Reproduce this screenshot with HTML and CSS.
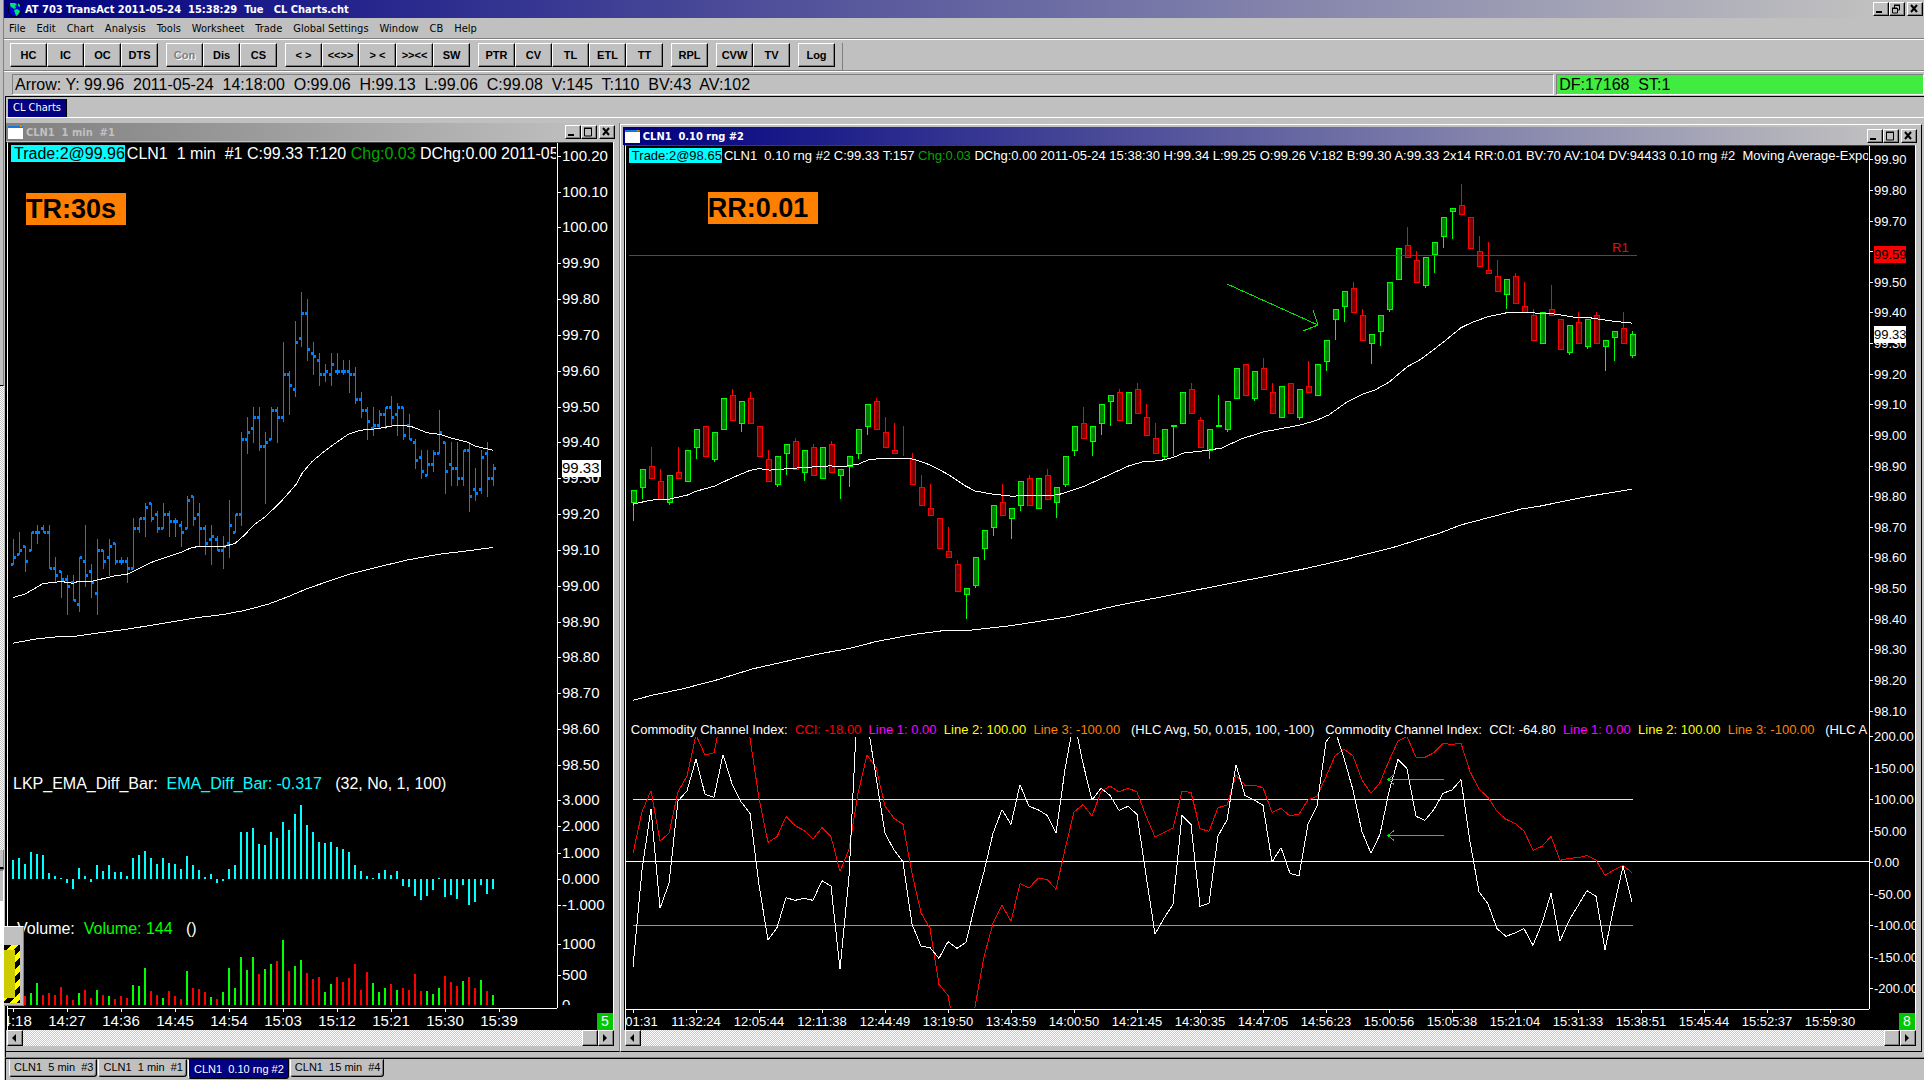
FILE: index.html
```html
<!DOCTYPE html>
<html lang="en">
<head>
    <meta charset="UTF-8">
    <meta name="viewport" content="width=device-width, initial-scale=1.0">
    <title>AT 703 TransAct</title>
    <link rel="stylesheet" href="styles.css">
</head>
<body>

<div class="behind">
    <div class="behind-top"></div>
    <div class="behind-track"></div>
    <div class="behind-button"></div>
    <div class="behind-box"></div>
    <div class="behind-page"></div>
</div>

<main class="app">
    <header class="title-bar app-title">
        <svg class="globe" viewBox="0 0 14 16">
            <ellipse cx="7" cy="8" rx="6.5" ry="7.5" fill="#0000d8" stroke="#000"/>
            <path d="M2 2h5l2 2-2 1 1 2-2 1-1-1-2-1-1-2zM6 9l3-1 3 2-2 4-2 1-1-3zM10 2l2 2v2l-2-1z" fill="#00e070"/>
        </svg>
        <h1>AT 703 TransAct 2011-05-24&nbsp; 15:38:29&nbsp; Tue&nbsp;&nbsp; CL Charts.cht</h1>
        <div class="window-buttons">
            <button aria-label="Minimize"><svg viewBox="0 0 12 10"><path d="M2 8h6" stroke-width="2"/></svg></button>
            <button aria-label="Restore"><svg viewBox="0 0 12 10"><path d="M4 1h6M4 1.5h6M9.500 1v5H8M4.500 1v3M2 4h5M2 4.500h5M2.500 4v5h5v-5"/></svg></button>
            <button aria-label="Close"><svg viewBox="0 0 12 10"><path d="M3 1l6 7M9 1l-6 7" stroke-width="2"/></svg></button>
        </div>
    </header>

    <nav class="menu">
        <button>File</button>
        <button>Edit</button>
        <button>Chart</button>
        <button>Analysis</button>
        <button>Tools</button>
        <button>Worksheet</button>
        <button>Trade</button>
        <button>Global Settings</button>
        <button>Window</button>
        <button>CB</button>
        <button>Help</button>
    </nav>

    <div class="toolbar">
        <div class="tool-group">
            <button>HC</button><button>IC</button><button>OC</button><button>DTS</button>
        </div>
        <div class="tool-group">
            <button disabled>Con</button><button>Dis</button><button>CS</button>
        </div>
        <div class="tool-group">
            <button>&lt; &gt;</button><button>&lt;&lt;&gt;&gt;</button><button>&gt; &lt;</button><button>&gt;&gt;&lt;&lt;</button><button>SW</button>
        </div>
        <div class="tool-group">
            <button>PTR</button><button>CV</button><button>TL</button><button>ETL</button><button>TT</button>
        </div>
        <div class="tool-group">
            <button>RPL</button>
        </div>
        <div class="tool-group">
            <button>CVW</button><button>TV</button>
        </div>
        <div class="tool-group">
            <button>Log</button>
        </div>
    </div>

    <div class="status">
        <div class="status-main">Arrow: Y: 99.96  2011-05-24  14:18:00  O:99.06  H:99.13  L:99.06  C:99.08  V:145  T:110  BV:43  AV:102</div>
        <div class="status-feed">DF:17168  ST:1</div>
    </div>

    <div class="workbook">
        <div class="workbook-tabs"><button>CL Charts</button></div>

        <div class="workspace">
            <section class="window window-min">
                <div class="title-bar inactive">
                    <svg class="doc-icon" viewBox="0 0 15 13"><path d="M0 0h15v13H0z" fill="#fff"/><path d="M0 0h15v2H0z" fill="#1878d8"/><path d="M12 0h2v1h-2z" fill="#f80"/></svg>
                    <h2>CLN1&nbsp; 1 min&nbsp; #1</h2>
                    <div class="window-buttons">
                        <button aria-label="Minimize"><svg viewBox="0 0 12 10"><path d="M2 8h6" stroke-width="2"/></svg></button>
                        <button aria-label="Maximize"><svg viewBox="0 0 12 10"><path d="M2 1h8M2 1.500h8M2.500 1v8h7v-8"/></svg></button>
                        <button aria-label="Close"><svg viewBox="0 0 12 10"><path d="M3 1l6 7M9 1l-6 7" stroke-width="2"/></svg></button>
                    </div>
                </div>
                <div class="chart">
                    <svg id="minChart" class="plot"></svg>
                    <p class="info info-head"><mark>Trade:2@99.96</mark>CLN1  1 min  #1 C:99.33 T:120 <span class="up">Chg:0.03</span> DChg:0.00 2011-05-</p>
                    <p class="info info-diff">LKP_EMA_Diff_Bar:  <span class="cyan">EMA_Diff_Bar: -0.317</span>   (32, No, 1, 100)</p>
                    <p class="info info-volume">Volume:  <span class="green">Volume: 144</span>   ()</p>
                    <div class="badge badge-tr">TR:30s</div>
                    <div class="link-number">5</div>
                </div>
                <div class="scrollbar">
                    <button aria-label="Scroll left"><svg viewBox="0 0 12 12"><path d="M8 2v8L4 6z"/></svg></button>
                    <span class="thumb"></span>
                    <button aria-label="Scroll right"><svg viewBox="0 0 12 12"><path d="M4 2v8l4-4z"/></svg></button>
                </div>
            </section>

            <section class="window window-range">
                <div class="title-bar">
                    <svg class="doc-icon" viewBox="0 0 15 13"><path d="M0 0h15v13H0z" fill="#fff"/><path d="M0 0h15v2H0z" fill="#1878d8"/><path d="M12 0h2v1h-2z" fill="#f80"/></svg>
                    <h2>CLN1&nbsp; 0.10 rng #2</h2>
                    <div class="window-buttons">
                        <button aria-label="Minimize"><svg viewBox="0 0 12 10"><path d="M2 8h6" stroke-width="2"/></svg></button>
                        <button aria-label="Maximize"><svg viewBox="0 0 12 10"><path d="M2 1h8M2 1.500h8M2.500 1v8h7v-8"/></svg></button>
                        <button aria-label="Close"><svg viewBox="0 0 12 10"><path d="M3 1l6 7M9 1l-6 7" stroke-width="2"/></svg></button>
                    </div>
                </div>
                <div class="chart">
                    <svg id="rangeChart" class="plot"></svg>
                    <p class="info info-head"><mark>Trade:2@98.65</mark>CLN1  0.10 rng #2 C:99.33 T:157 <span class="up">Chg:0.03</span> DChg:0.00 2011-05-24 15:38:30 H:99.34 L:99.25 O:99.26 V:182 B:99.30 A:99.33 2x14 RR:0.01 BV:70 AV:104 DV:94433 0.10 rng #2  Moving Average-Expo</p>
                    <p class="info info-cci">Commodity Channel Index:  <span class="red">CCI: -18.00</span>  <span class="magenta">Line 1: 0.00</span>  <span class="yellow">Line 2: 100.00</span>  <span class="orange">Line 3: -100.00</span>   (HLC Avg, 50, 0.015, 100, -100)   Commodity Channel Index:  CCI: -64.80  <span class="magenta">Line 1: 0.00</span>  <span class="yellow">Line 2: 100.00</span>  <span class="orange">Line 3: -100.00</span>   (HLC A</p>
                    <div class="badge badge-rr">RR:0.01</div>
                    <div class="link-number">8</div>
                </div>
                <div class="scrollbar">
                    <button aria-label="Scroll left"><svg viewBox="0 0 12 12"><path d="M8 2v8L4 6z"/></svg></button>
                    <span class="thumb"></span>
                    <button aria-label="Scroll right"><svg viewBox="0 0 12 12"><path d="M4 2v8l4-4z"/></svg></button>
                </div>
            </section>
        </div>
    </div>

    <div class="sheet-tabs">
        <button>CLN1&nbsp; 5 min&nbsp; #3</button>
        <button>CLN1&nbsp; 1 min&nbsp; #1</button>
        <button class="current">CLN1&nbsp; 0.10 rng #2</button>
        <button>CLN1&nbsp; 15 min&nbsp; #4</button>
    </div>

    <div class="floater"><div class="hazard"></div></div>
</main>

<script src="script.js"></script>
</body>
</html>
```

FILE: styles.css
```css
* {
    box-sizing: border-box;
}
body {
    margin: 0;
    height: 100vh;
    display: flex;
    overflow: hidden;
    background: #c0c0c0;
    font-family: "Liberation Sans", Arial, sans-serif;
    font-size: 11px;
    color: #000;
}
h1, h2, p {
    margin: 0;
    font-size: 12px;
}
button {
    margin: 0;
    padding: 0;
    border: none;
    background: #c0c0c0;
    color: #000;
    font-family: inherit;
    font-size: 11px;
}

/* strip of the window behind */
.behind {
    flex: 0 0 4px;
    display: flex;
    flex-direction: column;
}
.behind-top {
    flex: 387;
    border-bottom: 1px solid #000;
    border-right: 1px solid #808080;
}
.behind-track {
    flex: 466;
    background: repeating-conic-gradient(#fff 0 25%, #c0c0c0 0 50%) 0 0 / 2px 2px;
}
.behind-button {
    flex: 17;
    border-bottom: 2px solid #000;
    border-right: 1px solid #808080;
}
.behind-box {
    flex: 30;
    border-top: 2px solid #808080;
    border-right: 1px solid #fff;
}
.behind-page {
    flex: 180;
    background: #fff;
}

.app {
    flex: 1;
    min-width: 0;
    display: flex;
    flex-direction: column;
    position: relative;
}

/* title bars */
.title-bar {
    display: flex;
    align-items: center;
    height: 18px;
    gap: 3px;
    padding: 0 0 0 2px;
    background: linear-gradient(to right, #000080, #c0c0c0 97%);
    color: #fff;
}
.title-bar h1,
.title-bar h2 {
    flex: 1;
    font-family: "DejaVu Sans Condensed", Roboto, sans-serif;
    font-size: 11px;
    white-space: nowrap;
}
.app-title {
    flex: none;
    padding: 0 1px 0 4px;
}
.title-bar.inactive {
    background: linear-gradient(to right, #808080, #c0c0c0 97%);
    color: #c0c0c0;
}
.globe {
    width: 14px;
    height: 16px;
}
.doc-icon {
    width: 15px;
    height: 13px;
}
.window-buttons {
    display: flex;
}
.window-buttons button {
    width: 16px;
    height: 14px;
    border: 1px solid;
    border-color: #fff #000 #000 #fff;
    box-shadow: inset -1px -1px #808080;
}
.window-buttons button:last-child {
    margin-left: 2px;
}
.window-buttons svg {
    display: block;
    width: 12px;
    height: 10px;
    fill: none;
    stroke: #000;
}

.menu {
    flex: none;
    display: flex;
    gap: 11px;
    height: 22px;
    padding: 0 5px 1px;
    border-bottom: 1px solid #fff;
    box-shadow: inset 0 -1px #808080;
}
.menu button {
    background: none;
    font-family: "DejaVu Sans Condensed", Roboto, sans-serif;
}

.toolbar {
    flex: none;
    display: flex;
    gap: 8px;
    height: 32px;
    padding: 3px 6px 0;
    border-bottom: 1px solid #fff;
    box-shadow: inset 0 -1px #808080;
}
.tool-group {
    display: flex;
}
.tool-group:last-child {
    padding-right: 7px;
    border-right: 1px solid #808080;
}
.toolbar button {
    width: 37px;
    height: 24px;
    border: 1px solid;
    border-color: #fff #000 #000 #fff;
    box-shadow: inset -1px -1px #808080;
    font-weight: bold;
}
.toolbar button:disabled {
    color: #808080;
    text-shadow: 1px 1px #fff;
}

.status {
    flex: none;
    display: flex;
    gap: 2px;
    height: 24px;
    padding: 2px 0 1px 4px;
    border-left: 4px solid #c0c0c0;
    font-size: 16px;
    line-height: 19px;
    white-space: pre;
}
.status-main,
.status-feed {
    padding: 0 2px;
    border: 1px solid;
    border-color: #808080 #fff #fff #808080;
    overflow: hidden;
}
.status-main {
    flex: 1537;
}
.status-feed {
    flex: 362;
    background: #40ec40;
}

/* MDI area */
.workbook {
    flex: 1;
    min-height: 0;
    display: flex;
    flex-direction: column;
    margin-left: 1px;
    border-top: 1px solid #000;
    border-left: 1px solid #000;
    border-bottom: 1px solid #808080;
}
.workbook-tabs {
    flex: none;
    display: flex;
    height: 21px;
    padding: 2px 2px 0;
    border-bottom: 1px solid #fff;
}
.workbook-tabs button {
    padding: 0 5px 2px;
    border-right: 1px solid #000;
    background: #000080;
    color: #fff;
    font-family: "DejaVu Sans Condensed", Roboto, sans-serif;
}
.workspace {
    flex: 1;
    min-height: 0;
    display: flex;
    padding: 5px 2px 5px 0;
}
.window {
    min-width: 0;
    display: flex;
    flex-direction: column;
    border-bottom: 1px solid #000;
}
.window .title-bar {
    flex: none;
}
.window-min {
    flex: 613;
    padding: 0 4px 5px 0;
    border-right: 1px solid #808080;
}
.window-range {
    flex: 1303;
    margin-top: 1px;
    padding: 2px 4px 5px 2px;
    border-top: 1px solid #fff;
    border-left: 1px solid #fff;
    border-right: 1px solid #000;
}
.chart {
    flex: 1;
    min-height: 0;
    position: relative;
    margin: 0 2px 0 1px;
    border-left: 1px solid #fff;
    border-top: 1px solid #404040;
    background: #000;
    box-shadow: 1px 0 #fff, -1px 0 #000;
    color: #fff;
    overflow: hidden;
}
.window-min .chart {
    margin-top: 1px;
}
.window-range .chart,
.window-range .scrollbar {
    margin-left: 2px;
}
.plot {
    display: block;
    width: 100%;
    height: 100%;
    shape-rendering: crispEdges;
}

/* captions and badges lying over the plot */
.info {
    position: absolute;
    left: 3px;
    white-space: pre;
    overflow: hidden;
}
.info-head {
    top: 2px;
}
.info mark {
    margin-right: 2px;
    padding-left: 3px;
    background: #00ffff;
    color: #000;
}
.window-min .info {
    right: 57px;
    font-size: 16px;
    line-height: 18px;
}
.window-range .info {
    right: 47px;
    font-size: 13px;
    line-height: 16px;
}
.window-min .info-diff {
    left: 5px;
    bottom: 237px;
}
.window-min .info-volume {
    left: 9px;
    bottom: 92px;
}
.window-range .info-cci {
    left: 5px;
    bottom: 292px;
}
.badge {
    position: absolute;
    padding-right: 10px;
    background: #ff8000;
    color: #000;
    font-size: 27px;
    font-weight: bold;
    line-height: 32px;
}
.badge-tr {
    left: 18px;
    top: 50px;
}
.badge-rr {
    left: 82px;
    top: 46px;
}
.link-number {
    position: absolute;
    right: 0;
    bottom: 0;
    width: 16px;
    background: #00c800;
    font-size: 14px;
    line-height: 17px;
    text-align: center;
}
.up { color: #00a800; }
.cyan { color: #00ffff; }
.green { color: #00ff00; }
.red { color: #ff0000; }
.magenta { color: #ff00ff; }
.yellow { color: #ffff00; }
.orange { color: #ff8000; }

/* drawn parts of the plots */
.axis { stroke: #fff; fill: none; }
.average { stroke: #fff; fill: none; }
.label { fill: #fff; font-size: 13px; }
.window-min .label { font-size: 15px; }
.middle { text-anchor: middle; }
.plot .label-dark { fill: #000; }
.label-red { fill: #ff0000; font-size: 13px; }
.fill-white { fill: #fff; }
.fill-red { fill: #ff0000; }
.fill-green { fill: #00ff00; }
.fill-cyan { fill: #00ffff; }
.ohlc { fill: #0080ff; }
.line-red { stroke: #ff0000; fill: none; }
.line-yellow { stroke: #ffff00; fill: none; }
.line-orange { stroke: #ff8000; fill: none; }
.line-green { stroke: #00e800; fill: none; }
.candle-up { stroke: #00ff00; fill: #008000; }
.candle-down { stroke: #ff0000; fill: #800000; }

.scrollbar {
    flex: none;
    display: flex;
    height: 16px;
    margin: 0 1px;
    background: repeating-conic-gradient(#fff 0 25%, #c8c8c8 0 50%) 0 0 / 2px 2px;
}
.scrollbar button,
.thumb {
    width: 16px;
    border: 1px solid;
    border-color: #fff #000 #000 #fff;
    background: #c0c0c0;
    box-shadow: inset -1px -1px #808080;
}
.thumb {
    margin-left: auto;
}
.scrollbar svg {
    display: block;
    width: 12px;
    height: 12px;
}

.sheet-tabs {
    flex: none;
    display: flex;
    align-items: flex-start;
    gap: 1px;
    height: 22px;
    margin-left: 1px;
    padding-left: 3px;
    border-left: 1px solid #000;
    border-top: 1px solid #000;
}
.sheet-tabs button {
    height: 18px;
    padding: 0 3px 2px 4px;
    border: 1px solid;
    border-color: transparent #000 #000 #fff;
    border-radius: 0 0 3px 3px;
    box-shadow: inset -1px -1px #808080;
}
.sheet-tabs .current {
    height: 20px;
    padding: 0 4px 0 5px;
    background: #000080;
    color: #fff;
    box-shadow: none;
}

/* other program's toolbar showing over the corner */
.floater {
    position: absolute;
    left: 0;
    bottom: 74px;
    width: 20px;
    height: 80px;
    padding: 18px 3px 2px 0;
    background: #c0c0c0;
    border: 1px solid;
    border-color: #fff #808080 #808080 transparent;
    border-left: none;
}
.hazard {
    height: 100%;
    border: solid transparent;
    border-width: 5px 5px 5px 0;
    background:
        linear-gradient(#cccc00, #cccc00) padding-box,
        repeating-linear-gradient(135deg, #000 0 5px, #ffff00 5px 10px) border-box;
}
```

FILE: script.js
```js
const NS = "http://www.w3.org/2000/svg";

// all prices are in cents: 9933 = 99.33

// 1 min bars: [high, low, open, close]
const minBars = [
    [9913,9906,9906,9908],[9915,9909,9909,9910],[9911,9904,9911,9907],[9915,9910,9910,9915],[9917,9912,9915,9915],
    [9917,9915,9916,9915],[9917,9905,9915,9905],[9908,9901,9905,9903],[9904,9897,9904,9902],[9903,9892,9902,9900],
    [9903,9896,9901,9896],[9908,9893,9895,9908],[9917,9900,9907,9903],[9906,9897,9904,9901],[9913,9892,9898,9910],
    [9910,9905,9910,9907],[9913,9903,9908,9911],[9912,9906,9912,9907],[9908,9906,9907,9907],[9908,9901,9907,9905],
    [9919,9905,9905,9916],[9919,9915,9916,9919],[9923,9914,9919,9922],[9923,9918,9923,9919],[9921,9915,9920,9916],
    [9923,9916,9916,9920],[9921,9914,9920,9918],[9919,9914,9918,9918],[9918,9911,9917,9915],[9925,9916,9916,9924],
    [9925,9917,9925,9919],[9923,9911,9920,9916],[9917,9909,9916,9912],[9917,9906,9913,9914],[9914,9910,9913,9910],
    [9914,9905,9910,9911],[9924,9908,9912,9917],[9920,9915,9915,9920],[9943,9917,9920,9941],[9947,9937,9941,9943],
    [9950,9940,9944,9947],[9950,9938,9947,9939],[9943,9923,9939,9940],[9950,9941,9941,9949],[9950,9940,9949,9947],
    [9968,9946,9947,9959],[9960,9948,9959,9956],[9974,9953,9955,9968],[9982,9967,9969,9976],[9980,9963,9976,9966],
    [9968,9959,9965,9964],[9965,9956,9963,9959],[9962,9957,9959,9960],[9965,9956,9959,9962],[9965,9959,9960,9960],
    [9963,9959,9960,9960],[9963,9954,9960,9959],[9961,9951,9959,9952],[9954,9947,9952,9949],[9950,9941,9949,9946],
    [9950,9942,9944,9945],[9949,9944,9945,9948],[9950,9944,9948,9950],[9953,9945,9950,9947],[9951,9942,9948,9950],
    [9950,9941,9950,9942],[9948,9941,9945,9941],[9941,9933,9940,9935],[9938,9930,9936,9932],[9938,9931,9931,9934],
    [9938,9932,9934,9937],[9949,9937,9937,9943],[9940,9926,9940,9932],[9940,9928,9934,9933],[9940,9928,9933,9930],
    [9938,9928,9930,9938],[9940,9921,9938,9925],[9933,9924,9927,9926],[9938,9926,9927,9936],[9940,9925,9937,9930],
    [9934,9928,9930,9933]
];

// averages: [bar, price]
const minFast = [[0,9896.7],[2,9897.7],[5,9900.6],[8,9901.2],[10,9900.7],[11,9901.3],[13.3,9901.3],[17,9902.8],[19,9903.2],[23,9906.5],[28,9909.3],[29.7,9910.6],[31,9911],[35.3,9911],[37,9911.8],[38.6,9914.2],[40.3,9917.2],[42,9919.2],[44.5,9923.2],[47.2,9928.3],[48.2,9931.4],[49.8,9934.6],[51.8,9937.4],[54,9940.1],[56,9942.4],[58,9943.4],[60.5,9943.8],[64,9944.8],[66.3,9944.5],[69,9942.7],[71.3,9942.2],[73,9941.2],[75.5,9940.2],[77,9939],[80,9937.8]];
const minSlow = [[0,9884],[4,9885.2],[7.6,9885.8],[10.3,9885.9],[13.6,9886.7],[18.2,9887.7],[22.8,9888.9],[31,9891.2],[34.7,9891.9],[38.6,9893.1],[42.6,9894.9],[45.9,9897],[49,9899.2],[53,9901.5],[56.4,9903.4],[61,9905.3],[65.7,9907.2],[71,9908.8],[75.5,9909.7],[80,9910.7]];

const diffBars = [.72,.8,.57,1.03,.95,.92,.23,.12,.03,-.15,-.38,.42,.12,-.1,.53,.3,.53,.27,.27,.12,.8,.92,1.07,.8,.57,.8,.61,.57,.38,.88,.53,.35,.08,.19,-.15,-.06,.38,.53,1.79,1.79,1.95,1.34,1.3,1.79,1.56,2.17,1.87,2.48,2.82,2.06,1.79,1.41,1.37,1.41,1.22,1.15,1.03,.53,.3,.12,.04,.23,.35,.15,.3,-.26,-.3,-.65,-.8,-.65,-.42,.04,-.69,-.61,-.76,-.22,-.99,-.88,-.22,-.57,-.38];

// volume per bar, negative = down bar
const volume = [90,-120,-140,190,350,-157,-190,-157,-286,-157,-76,190,-238,-108,238,-157,140,-92,-140,-108,319,302,594,-221,-157,108,-221,-140,-92,545,-270,-254,-205,124,-92,205,594,270,772,562,772,-497,578,659,-707,1048,-545,626,724,-513,-416,-448,205,335,-448,-367,-432,-659,-238,-529,351,205,270,-335,238,-270,-238,-497,-221,221,173,270,-464,-367,-302,383,-448,-270,400,-221,157];

// range bars: [open, close, high, low], high and low only where they break the 10 cent range
const rangeBars = [
    [9878,9882],[9883,9889],[9890,9886],[9885,9879],[9878,9887],[9888,9886],[9885,9895],[9896,9902],[9903,9893],[9892,9901],
    [9902,9912],[9913,9905],[9904,9911],[9912,9904],[9903,9893],[9892,9885],[9884,9893],[9894,9897],[9898,9889],[9888,9895],
    [9896,9887],[9886,9896],[9897,9888],[9887,9889],[9890,9893],[9894,9902],[9903,9910],[9911,9902],[9901,9896],[9895,9894],
    [9893,9893,9903,9893],[9892,9884],[9883,9877],[9876,9874],[9873,9863],[9862,9860],[9858,9849],[9848,9850],[9851,9860],[9863,9869],
    [9870,9877],[9878,9874],[9873,9876],[9877,9885],[9886,9877],[9876,9886],[9887,9879],[9878,9883],[9884,9893],[9895,9903],
    [9904,9899],[9898,9903],[9904,9910],[9911,9913],[9914,9905],[9904,9914],[9915,9907],[9906,9900],[9899,9894],[9893,9902],
    [9903,9903.1],[9904,9914],[9915,9907],[9905,9896],[9895,9902],[9903,9903.1,9913,9903],[9902,9911],[9912,9922],[9923,9913],[9912,9921],
    [9922,9915],[9914,9907],[9906,9916],[9917,9907],[9906,9915],[9916,9914],[9913,9923],[9924,9931],[9938,9941],[9942,9947],
    [9948,9940],[9939,9931],[9930,9933],[9934,9939],[9941,9950],[9951,9961],[9962,9958],[9957,9950],[9949,9958],[9959,9963],
    [9965,9971],[9973,9974],[9975,9972],[9971,9961],[9960,9955],[9954,9953],[9952,9947],[9946,9951],[9952,9943],[9942,9940],
    [9939,9931],[9930,9940],[9941,9939],[9938,9928],[9927,9936],[9937,9930],[9929,9938],[9939,9930],[9929,9931],[9932,9934],
    [9935,9930],[9926,9933,9934,9925]
];
const rangeFast = [[0,9877.4],[2,9878.7],[4,9879],[6.1,9880.4],[7,9881.6],[9.1,9883.3],[11.1,9886.1],[13,9888.4],[14,9889],[15.2,9888.5],[18.7,9889.3],[22,9889.9],[23.1,9889.5],[25.1,9890.5],[26.1,9891.8],[27.8,9892.4],[30.6,9892.4],[31.7,9891.6],[33.1,9890.1],[35,9887.1],[36.9,9883.4],[38,9881.7],[39.6,9880.8],[42,9880],[47.2,9880.4],[50.2,9883.3],[51.9,9885.6],[55.1,9889.9],[56.9,9891.4],[58.4,9891.5],[60,9892.6],[61.2,9894.1],[63.4,9894.8],[65.4,9895.7],[67.6,9898.7],[70.1,9901],[74.1,9903.2],[75.9,9904.7],[77.3,9906.5],[79.3,9910.7],[81.1,9913.3],[82.4,9914.6],[84,9917.2],[86,9922.2],[87.6,9924.8],[90,9930.2],[92,9935],[93.2,9936.7],[95.1,9938.7],[97.1,9939.9],[99.5,9939.9],[102.3,9939.5],[104.7,9938.4],[106.2,9938.3],[109,9937.1],[111,9936.5]];
const rangeSlow = [[0,9813.3],[2,9814.9],[5.4,9817],[9.1,9819.8],[13.3,9823.6],[20.7,9828.5],[24.1,9830.3],[27,9832.5],[31.1,9834.8],[34.8,9836.2],[37.4,9836.2],[42,9837.7],[48.1,9840.5],[54,9844.4],[74.5,9856.2],[79.3,9859.4],[84.4,9863.2],[89.6,9867.9],[92,9870.6],[98.7,9875.8],[100.7,9876.7],[106.3,9880],[111,9882.3]];

// CCI curves, in thirds of a pixel below the pane origin
const cciShort = [770,480,296,595,520,273,243,147,253,262,134,221,275,310,525,690,653,563,571,565,571,512,528,778,500,-60,30,200,370,420,455,643,708,713,745,695,715,697,585,485,370,299,343,224,289,299,316,370,178,30,160,270,235,256,301,289,313,495,672,625,583,316,343,589,580,378,330,164,257,270,286,456,413,490,498,343,288,95,60,145,240,365,430,373,245,148,176,319,331,298,250,240,209,395,545,582,656,679,669,656,706,640,550,693,632,587,542,559,720,590,469,575];
const cciLong = [430,305,242,393,370,245,198,75,135,128,0,-60,-20,85,265,397,380,320,347,361,387,353,380,484,418,250,135,172,288,325,343,490,608,655,823,856,1000,1000,890,740,640,586,634,521,534,505,508,538,418,306,284,318,245,228,246,234,246,318,381,368,354,244,247,356,364,293,286,195,226,226,233,307,295,318,312,270,259,200,138,117,138,210,250,218,152,93,80,142,142,128,101,103,100,185,237,262,304,328,340,363,421,409,379,451,445,443,437,450,496,480,466,488];

const minTimes = ["14:18", "14:27", "14:36", "14:45", "14:54", "15:03", "15:12", "15:21", "15:30", "15:39"];
const rangeTimes = ["11:01:31", "11:32:24", "12:05:44", "12:11:38", "12:44:49", "13:19:50", "13:43:59", "14:00:50", "14:21:45", "14:30:35", "14:47:05", "14:56:23", "15:00:56", "15:05:38", "15:21:04", "15:31:33", "15:38:51", "15:45:44", "15:52:37", "15:59:30"];

function add(parent, name, attrs, text) {
    let el = document.createElementNS(NS, name);
    for (let key in attrs) {
        el.setAttribute(key, attrs[key]);
    }
    if (text !== undefined) {
        el.textContent = text;
    }
    parent.appendChild(el);
    return el;
}

function rect(svg, x, y, w, h, cls) {
    add(svg, "rect", { x: x, y: y, width: w, height: h, class: cls });
}

function path(svg, d, cls) {
    return add(svg, "path", { d: d, class: cls });
}

function curve(svg, points, cls) {
    return add(svg, "polyline", { points: points.map((p) => p.join(",")).join(" "), class: cls });
}

function axisLabel(svg, x, y, text) {
    path(svg, "M" + x + " " + (Math.round(y) + 0.5) + "h4", "axis");
    add(svg, "text", { x: x + 5, y: Math.round(y) + 5, class: "label" }, text);
}

function priceTag(svg, x, y, width, text, cls) {
    rect(svg, x, Math.round(y) - 8, width, 17, cls);
    add(svg, "text", { x: x, y: Math.round(y) + 5, class: "label label-dark" }, text);
}

function timeAxis(svg, w, axisX, y, start, step, times, h) {
    path(svg, "M0 " + (y + 0.5) + "H" + axisX + "M" + (axisX + 0.5) + " 0V" + y, "axis");
    times.forEach((time, i) => {
        let x = start + i * step;
        path(svg, "M" + (x + 0.5) + " " + y + "v4", "axis");
        add(svg, "text", { x: x, y: h - 4, class: "label middle" }, time);
    });
}

function drawMinChart() {
    let svg = document.getElementById("minChart");
    let w = svg.clientWidth;
    let h = svg.clientHeight;
    svg.replaceChildren();
    let axisX = w - 56;
    let scale = 3.584 * (h - 244) / 643;
    let py = (p) => 12.7 + (10020 - p) * scale;
    let bx = (i) => 5 + i * 6;
    let zero = h - 151;
    let base = h - 25;

    minBars.forEach((b, i) => {
        let x = bx(i);
        rect(svg, x, py(b[0]), 1, py(b[1]) - py(b[0]) + 1, "ohlc");
        rect(svg, x - 2, Math.round(py(b[2])) - 1, 2, 3, "ohlc");
        rect(svg, x + 1, Math.round(py(b[3])) - 1, 2, 3, "ohlc");
    });
    curve(svg, minFast.map((p) => [bx(p[0]), py(p[1])]), "average");
    curve(svg, minSlow.map((p) => [bx(p[0]), py(p[1])]), "average");

    diffBars.forEach((v, i) => {
        rect(svg, bx(i) - 1, v > 0 ? zero - v * 26.3 : zero, 2, Math.abs(v) * 26.3, "fill-cyan");
    });
    volume.forEach((v, i) => {
        let size = Math.abs(v) * 0.062;
        rect(svg, bx(i) - 1, base - size, 2, size, v > 0 ? "fill-green" : "fill-red");
    });

    for (let p = 10020; p >= 9850; p -= 10) {
        axisLabel(svg, axisX, py(p), (p / 100).toFixed(2));
    }
    for (let v = 3; v >= -1; v--) {
        axisLabel(svg, axisX, zero - v * 26.3, v.toFixed(3));
    }
    axisLabel(svg, axisX, base - 61, "1000");
    axisLabel(svg, axisX, base - 30, "500");
    add(svg, "text", { x: axisX + 5, y: base + 5, class: "label" }, "0");
    rect(svg, axisX + 2, base, 20, 6, "label-dark");
    priceTag(svg, axisX + 5, py(9933), 39, "99.33", "fill-white");
    timeAxis(svg, w, axisX, h - 22, 5, 54, minTimes, h);
}

function drawRangeChart() {
    let svg = document.getElementById("rangeChart");
    let w = svg.clientWidth;
    let h = svg.clientHeight;
    svg.replaceChildren();
    let axisX = w - 46;
    let scale = 3.057 * (h - 300) / 583;
    let py = (p) => 13.3 + (9990 - p) * scale;
    let bx = (i) => 7 + i * 9;
    let top = h - 320;
    let cy = (v) => top + v / 3;
    let last = bx(111);

    rangeBars.forEach((b, i) => {
        let up = b[1] > b[0];
        let high = b[2] || (up ? b[1] : b[1] + 10);
        let low = b[3] || (up ? b[1] - 10 : b[1]);
        let x = bx(i) + 0.5;
        let y1 = Math.round(py(Math.max(b[0], b[1]))) + 0.5;
        let y2 = Math.round(py(Math.min(b[0], b[1]))) + 0.5;
        let cls = up ? "candle-up" : "candle-down";
        path(svg, "M" + x + " " + Math.round(py(high)) + "V" + Math.round(py(low)), cls);
        rect(svg, x - 2, y1, 5, y2 - y1, cls);
    });
    curve(svg, rangeFast.map((p) => [bx(p[0]), py(p[1])]), "average");
    curve(svg, rangeSlow.map((p) => [bx(p[0]), py(p[1])]), "average");

    let r1 = Math.ceil(py(9959)) + 0.5;
    path(svg, "M3 " + r1 + "H" + (last + 5), "line-red");
    add(svg, "text", { x: last - 20, y: r1 - 4, class: "label-red" }, "R1");

    // CCI pane
    let clip = add(svg, "clipPath", { id: "cciPane" });
    rect(clip, 0, top + 27, axisX, 271);
    path(svg, "M7 " + (top + 89.5) + "H" + (last + 1), "line-yellow");
    path(svg, "M7 " + (top + 215.5) + "H" + (last + 1), "line-orange");
    path(svg, "M0 " + (top + 151.5) + "H" + axisX, "axis");
    curve(svg, cciLong.map((v, i) => [bx(i), cy(v)]), "line-red").setAttribute("clip-path", "url(#cciPane)");
    curve(svg, cciShort.map((v, i) => [bx(i), cy(v)]), "average").setAttribute("clip-path", "url(#cciPane)");

    // arrows
    path(svg, "M601 138L692 179M687 164l5 15l-15 6", "line-green");
    path(svg, "M818 " + (top + 69.5) + "h-56M768 " + (top + 64.5) + "l-6 5l6 5", "line-green");
    path(svg, "M818 " + (top + 125.5) + "h-56M768 " + (top + 120.5) + "l-6 5l6 5", "line-green");

    for (let p = 9990; p >= 9810; p -= 10) {
        // the R1 tag takes the place of this label
        if (p === 9960) {
            path(svg, "M" + axisX + " " + (Math.round(py(p)) + 0.5) + "h4", "axis");
            continue;
        }
        axisLabel(svg, axisX, py(p), (p / 100).toFixed(2));
    }
    for (let v = 200; v >= -200; v -= 50) {
        axisLabel(svg, axisX, top + 152 - v * 0.63, v.toFixed(2));
    }
    priceTag(svg, axisX + 5, py(9959), 32, "99.59", "fill-red");
    priceTag(svg, axisX + 5, py(9933), 32, "99.33", "fill-white");
    timeAxis(svg, w, axisX, h - 21, 7, 63, rangeTimes, h);
}

function draw() {
    drawMinChart();
    drawRangeChart();
}

window.addEventListener("resize", draw);
draw();
```
